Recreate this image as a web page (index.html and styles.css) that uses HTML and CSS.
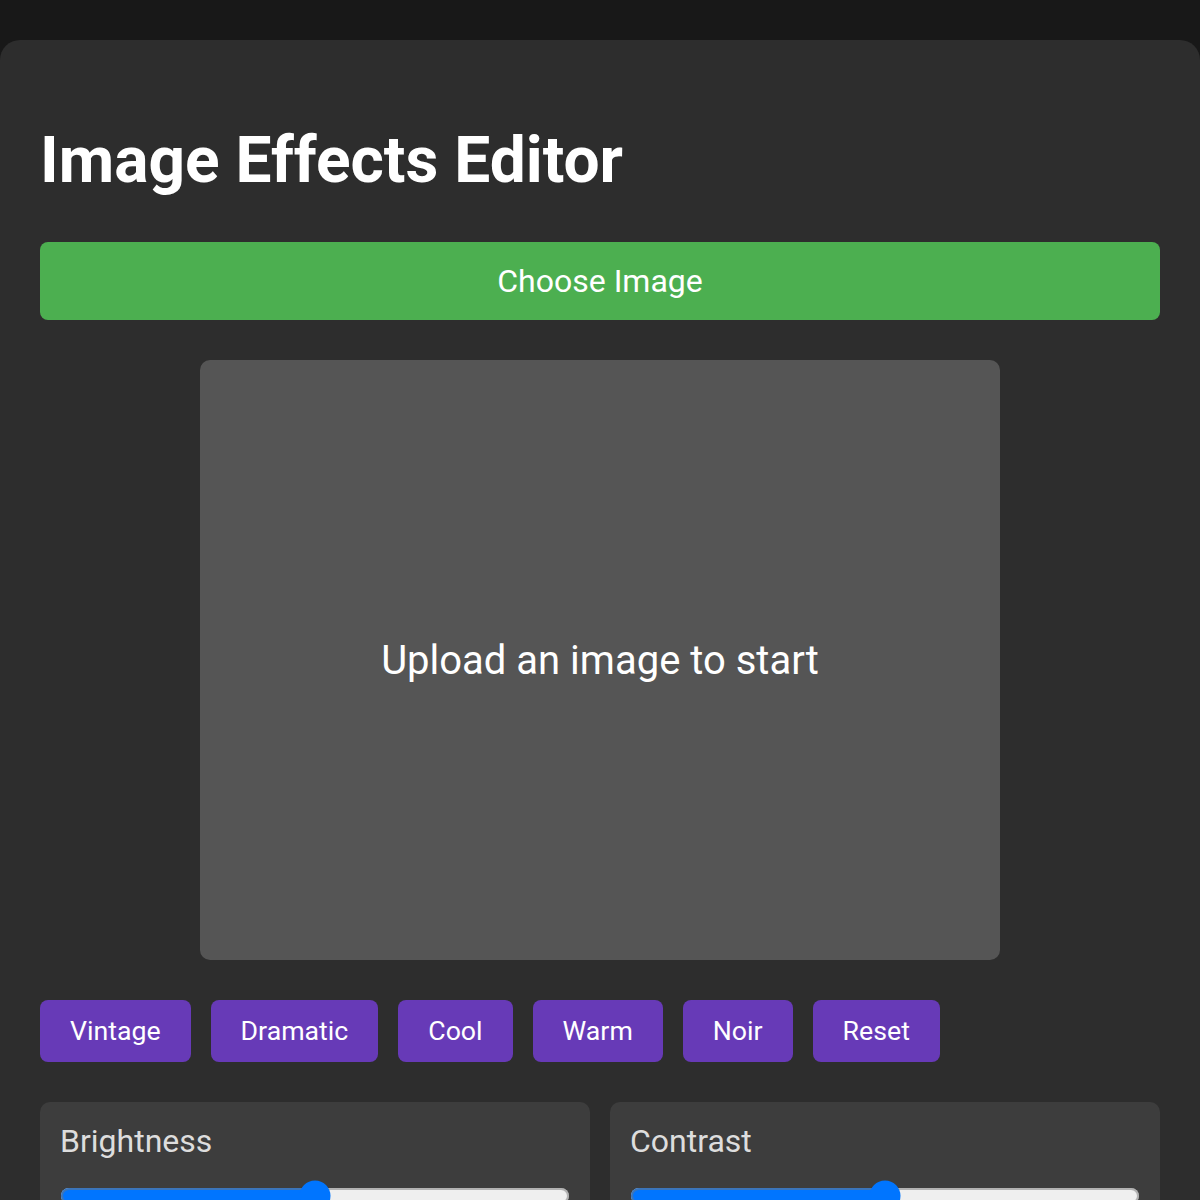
FILE: index.html
```html
<!DOCTYPE html>
<html>
<head>
    <title>Image Effects Editor</title>
    <link rel="stylesheet" href="styles.css">
</head>
<body>
    <div class="container">
        <h1>Image Effects Editor</h1>
        <button class="upload-btn">Choose Image</button>

        <div class="preview">
            <span class="placeholder">Upload an image to start</span>
        </div>

        <div class="presets">
            <button class="preset">Vintage</button>
            <button class="preset">Dramatic</button>
            <button class="preset">Cool</button>
            <button class="preset">Warm</button>
            <button class="preset">Noir</button>
            <button class="preset">Reset</button>
        </div>

        <div class="controls">
            <div class="control">
                <label>Brightness</label>
                <input type="range" min="0" max="200" value="100">
            </div>
            <div class="control">
                <label>Contrast</label>
                <input type="range" min="0" max="200" value="100">
            </div>
        </div>
    </div>
</body>
</html>
```

FILE: styles.css
```css
body {
    margin: 0;
    padding-top: 40px;
    background-color: #181818;
    font-family: Roboto, "Noto Sans", sans-serif;
    color: #fff;
}
.container {
    padding: 40px;
    background-color: #2d2d2d;
    border-radius: 20px;
}
h1 {
    font-size: 64px;
    margin: 43px 0 44px;
}
.upload-btn {
    display: block;
    width: 100%;
    padding: 20px;
    font-family: inherit;
    font-size: 32px;
    color: white;
    background-color: #4caf50;
    border: none;
    border-radius: 8px;
    cursor: pointer;
}
.preview {
    width: 800px;
    height: 600px;
    margin: 40px auto;
    display: flex;
    align-items: center;
    justify-content: center;
    background-color: #555;
    border-radius: 10px;
}
.placeholder {
    font-size: 40px;
}
.presets {
    display: flex;
    gap: 20px;
    margin-bottom: 40px;
}
.preset {
    padding: 16px 30px;
    font-family: inherit;
    font-size: 26.7px;
    line-height: 30px;
    color: white;
    background-color: #673ab7;
    border: none;
    border-radius: 8px;
    cursor: pointer;
}
.controls {
    display: grid;
    grid-template-columns: 1fr 1fr;
    gap: 20px;
}
.control {
    padding: 20px;
    background-color: #3d3d3d;
    border-radius: 10px;
}
.control label {
    display: block;
    font-size: 32px;
    color: #ddd;
    margin-bottom: 20px;
}
.control input {
    display: block;
    zoom: 2;
    width: 100%;
    margin: 0;
}
```
